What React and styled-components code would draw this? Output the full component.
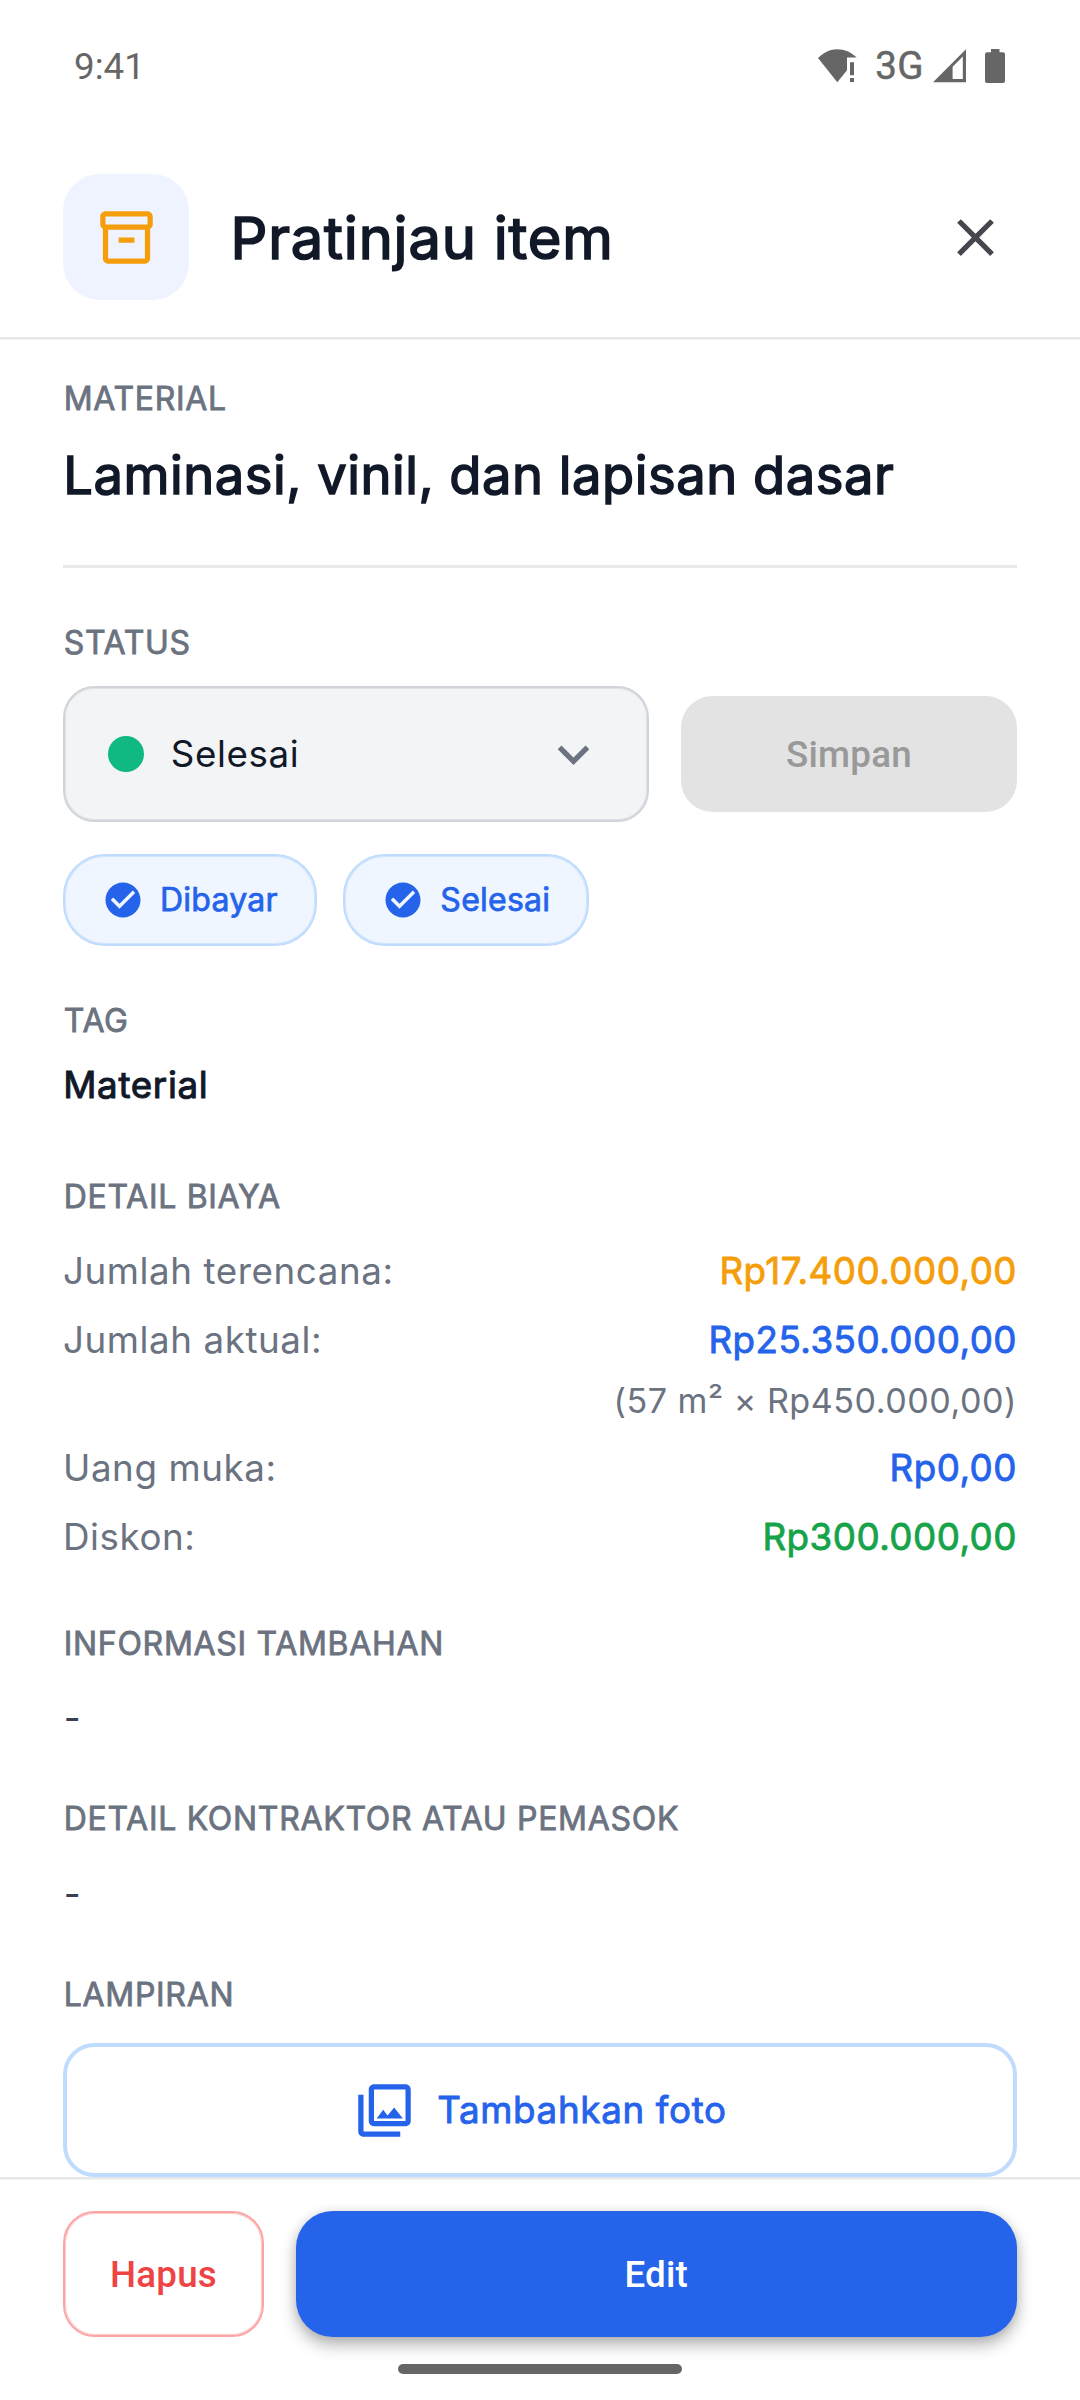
import React from "react";
import styled, { createGlobalStyle } from "styled-components";

const GlobalStyle = createGlobalStyle`
  *, *::before, *::after { box-sizing: border-box; }
  body {
    margin: 0;
    background: #ffffff;
    font-family: Inter, "Noto Sans", sans-serif;
    color: #111827;
  }
  button { font: inherit; margin: 0; cursor: pointer; }
  h1, h2, h3, p, dl, dt, dd { margin: 0; font-weight: 400; }
`;

const Screen = styled.div`
  display: flex;
  flex-direction: column;
  width: 1080px;
  height: 2400px;
  overflow: hidden;
  background: #ffffff;
`;

/* Status bar */

const StatusBar = styled.div`
  display: flex;
  align-items: center;
  justify-content: space-between;
  height: 132px;
  padding: 0 75px 0 74px;
  font-family: Roboto, sans-serif;
  color: #666666;
`;

const Clock = styled.span`
  padding-top: 1px;
  font-size: 36.75px;
  line-height: 44px;
`;

const Indicators = styled.div`
  display: flex;
  align-items: center;
  svg { display: block; fill: #666666; }
`;

const Network = styled.span`
  margin: 0 9px 0 18px;
  font-size: 38.5px;
  line-height: 44px;
  letter-spacing: 0.5px;
  -webkit-text-stroke: 0.5px currentColor;
`;

const BatterySlot = styled.span`
  margin-left: 19px;
`;

/* Header */

const Header = styled.header`
  display: flex;
  align-items: center;
  flex: none;
  height: 207px;
  padding: 5px 73px 0 63px;
  border-bottom: 2px solid #e5e7eb;
  box-shadow: 0 1px 0 #f1f2f4;
`;

const HeaderIcon = styled.div`
  display: flex;
  align-items: center;
  justify-content: center;
  width: 126px;
  height: 126px;
  border-radius: 36.75px;
  background: #eff3ff;
`;

const Title = styled.h1`
  flex: 1;
  margin-left: 41.5px;
  padding-top: 1px;
  font-size: 57.75px;
  line-height: 74px;
  letter-spacing: 0.84px;
  -webkit-text-stroke: 1.7px currentColor;
`;

const CloseButton = styled.button`
  display: flex;
  padding: 0;
  border: 0;
  background: none;
`;

const Icon = styled.svg`
  display: block;
  flex: none;
  width: ${(p) => p.$size || 63}px;
  height: ${(p) => p.$size || 63}px;
  fill: ${(p) => p.$color};
`;

/* Content */

const Content = styled.main`
  display: flex;
  flex-direction: column;
  flex: none;
  height: 1838px;
  padding: 38px 63px 0;
`;

const Label = styled.h3`
  margin-top: ${(p) => p.$top || 0}px;
  padding-top: 1px;
  height: 42px;
  font-size: 32px;
  line-height: 42px;
  letter-spacing: 0.7px;
  text-indent: 0.75px;
  text-transform: uppercase;
  color: #6b7280;
  -webkit-text-stroke: 0.8px currentColor;
`;

const ItemName = styled.h2`
  margin-top: 19px;
  padding-bottom: 53px;
  border-bottom: 3px solid #e9e9ec;
  font-size: 52.5px;
  line-height: 74px;
  letter-spacing: 0.52px;
  text-indent: 0.25px;
  -webkit-text-stroke: 1.5px currentColor;
`;

const StatusRow = styled.div`
  display: flex;
  align-items: center;
  gap: 32px;
  margin-top: 23px;
`;

const Select = styled.button`
  display: flex;
  align-items: center;
  width: 586px;
  height: 136px;
  padding: 0 42px 0 42.5px;
  border: 2px solid #d1d5db;
  border-radius: 31.5px;
  background: #f3f4f6;
  box-shadow: inset 0 0 0 1px rgba(209, 213, 219, 0.6);
`;

const StatusDot = styled.span`
  width: 36.75px;
  height: 36.75px;
  border-radius: 50%;
  background: #10b981;
`;

const SelectValue = styled.span`
  flex: 1;
  margin-left: 26.5px;
  font-size: 36.75px;
  line-height: 52px;
  letter-spacing: 0.62px;
  text-align: left;
  color: #111827;
`;

const SaveButton = styled.button`
  flex: 1;
  height: 116px;
  padding: 0;
  border: 0;
  border-radius: 31.5px;
  background: #e3e3e3;
  font-family: Roboto, sans-serif;
  font-size: 36.75px;
  font-weight: 500;
  letter-spacing: 0.26px;
  color: #999999;
`;

const Chips = styled.div`
  display: flex;
  gap: 26.5px;
  margin-top: 32px;
`;

const Chip = styled.span`
  display: flex;
  align-items: center;
  gap: 16px;
  height: 92px;
  padding: 0 37px;
  border: 2px solid #bfdbfe;
  border-radius: 42px;
  background: #eff6ff;
  box-shadow: inset 0 0 0 1px rgba(191, 219, 254, 0.6);
  font-size: 32px;
  line-height: 42px;
  letter-spacing: 0.25px;
  color: #2563eb;
  -webkit-text-stroke: 0.75px currentColor;
  svg { stroke: none; }
`;

const TagValue = styled.p`
  margin-top: 18px;
  font-size: 36.75px;
  line-height: 52px;
  letter-spacing: 0.66px;
  text-indent: 0.25px;
  -webkit-text-stroke: 1px currentColor;
`;

const CostList = styled.dl`
  margin-top: 28px;
`;

const CostRow = styled.div`
  display: flex;
  justify-content: space-between;
  margin-bottom: 17px;
  font-size: 36.75px;
  line-height: 52px;
`;

const CostName = styled.dt`
  letter-spacing: 0.57px;
  color: #6b7280;
`;

const CostValue = styled.dd`
  letter-spacing: 0.5px;
  color: ${(p) => p.$color};
  -webkit-text-stroke: 0.85px currentColor;
`;

const CostNote = styled.dd`
  margin: -3px 0 20px;
  font-size: 34.125px;
  line-height: 42px;
  letter-spacing: 0.52px;
  text-align: right;
  color: #6b7280;
`;

const Empty = styled.p`
  height: 52px;
  margin-top: ${(p) => p.$top}px;
  padding-top: 2px;
  font-size: 36.75px;
  line-height: 52px;
  text-indent: 0.75px;
  color: #374151;
`;

const PhotoButton = styled.button`
  display: flex;
  align-items: center;
  justify-content: center;
  gap: 21px;
  height: 134px;
  margin-top: 28px;
  padding: 0;
  border: 4px solid #bfdbfe;
  border-radius: 31.5px;
  background: #ffffff;
  font-size: 36.75px;
  letter-spacing: 0.67px;
  color: #2563eb;
`;

const PhotoText = styled.span`
  line-height: 52px;
  -webkit-text-stroke: 0.85px currentColor;
`;

/* Footer */

const Footer = styled.footer`
  display: flex;
  flex-direction: column;
  align-items: center;
  flex: none;
  height: 223px;
  border-top: 2px solid #e5e7eb;
  box-shadow: inset 0 1px 0 #f1f2f4;
`;

const Actions = styled.div`
  display: flex;
  gap: 31.5px;
  width: 100%;
  padding: 32px 63px 0;
`;

const ActionButton = styled.button`
  height: 126px;
  padding: 0;
  font-family: Roboto, sans-serif;
  font-size: 36.75px;
  font-weight: 500;
  letter-spacing: 0.2px;
`;

const DeleteButton = styled(ActionButton)`
  width: 201px;
  border: 2px solid #fca5a5;
  border-radius: 32px;
  background: #ffffff;
  box-shadow: inset 0 0 0 1px rgba(252, 165, 165, 0.6);
  color: #ef4444;
`;

const EditButton = styled(ActionButton)`
  flex: 1;
  border: 0;
  border-radius: 36.75px;
  background: #2563eb;
  box-shadow: 0 8px 16px rgba(0, 0, 0, 0.3), 0 0 10px rgba(0, 0, 0, 0.08);
  color: #ffffff;
`;

const HomeIndicator = styled.div`
  width: 284px;
  height: 10px;
  margin-top: 27px;
  border-radius: 5px;
  background: #666666;
`;

const PATHS = {
  box: "M20 2H4c-1 0-2 .9-2 2v3.01c0 .72.43 1.34 1 1.69V20c0 1.1 1.1 2 2 2h14c.9 0 2-.9 2-2V8.7c.57-.35 1-.97 1-1.69V4c0-1.1-1-2-2-2zm-1 18H5V9h14v11zm1-13H4V4h16v3zM9 12h6v2H9z",
  close:
    "M19 6.41L17.59 5 12 10.59 6.41 5 5 6.41 10.59 12 5 17.59 6.41 19 12 13.41 17.59 19 19 17.59 13.41 12z",
  chevron: "M7.41 8.59L12 13.17l4.59-4.58L18 10l-6 6-6-6z",
  check:
    "M12 2C6.48 2 2 6.48 2 12s4.48 10 10 10 10-4.48 10-10S17.52 2 12 2zm-2 15l-5-5 1.41-1.41L10 14.17l7.59-7.59L19 8l-9 9z",
  photos:
    "M20 4v12H8V4h12m0-2H8c-1.1 0-2 .9-2 2v12c0 1.1.9 2 2 2h12c1.1 0 2-.9 2-2V4c0-1.1-.9-2-2-2zm-8.5 9.67l1.69 2.26 2.48-3.1L19 15H9zM2 6v14c0 1.1.9 2 2 2h14v-2H4V6H2z",
};

const Glyph = ({ name, color, size }) => (
  <Icon viewBox="0 0 24 24" $color={color} $size={size} aria-hidden="true">
    <path d={PATHS[name]} />
  </Icon>
);

const WifiAlert = () => (
  <svg width="39" height="34" viewBox="0 0 39 34">
    <path d="M19.3 33.2 0 9C6 3 12 0.2 19.3 0.2S33 3 38.8 8.6H29V21.3Z" />
    <path d="M32 13.2h4v13h-4zM32 29h4v4h-4z" />
  </svg>
);

const Signal = () => (
  <svg width="33" height="34" viewBox="0 0 33 34">
    <path
      fillRule="evenodd"
      d="M0 33.3 33 0.3V33.3ZM19.6 17.8V30H29.8V7.6Z"
    />
  </svg>
);

const Battery = () => (
  <svg width="20" height="34" viewBox="0 0 20 34">
    <path d="M6 0h8.5v3.3H18a2 2 0 0 1 2 2V32a2 2 0 0 1-2 2H2a2 2 0 0 1-2-2V5.3a2 2 0 0 1 2-2h4z" />
  </svg>
);

const BLUE = "#2563eb";

const Cost = ({ name, value, color }) => (
  <CostRow>
    <CostName>{name}</CostName>
    <CostValue $color={color}>{value}</CostValue>
  </CostRow>
);

export default function App() {
  return (
    <Screen>
      <GlobalStyle />
      <StatusBar>
        <Clock>9:41</Clock>
        <Indicators>
          <WifiAlert />
          <Network>3G</Network>
          <Signal />
          <BatterySlot>
            <Battery />
          </BatterySlot>
        </Indicators>
      </StatusBar>

      <Header>
        <HeaderIcon>
          <Glyph name="box" color="#f59e0b" />
        </HeaderIcon>
        <Title>Pratinjau item</Title>
        <CloseButton aria-label="Tutup">
          <Glyph name="close" color="#49454f" />
        </CloseButton>
      </Header>

      <Content>
        <Label>Material</Label>
        <ItemName>Laminasi, vinil, dan lapisan dasar</ItemName>

        <Label $top={53}>Status</Label>
        <StatusRow>
          <Select>
            <StatusDot />
            <SelectValue>Selesai</SelectValue>
            <Glyph name="chevron" color="#6b7280" />
          </Select>
          <SaveButton disabled>Simpan</SaveButton>
        </StatusRow>
        <Chips>
          {["Dibayar", "Selesai"].map((text) => (
            <Chip key={text}>
              <Glyph name="check" color={BLUE} size={42} />
              {text}
            </Chip>
          ))}
        </Chips>

        <Label $top={53}>Tag</Label>
        <TagValue>Material</TagValue>

        <Label $top={64}>Detail biaya</Label>
        <CostList>
          <Cost name="Jumlah terencana:" value="Rp17.400.000,00" color="#f59e0b" />
          <Cost name="Jumlah aktual:" value="Rp25.350.000,00" color={BLUE} />
          <CostNote>(57 m² × Rp450.000,00)</CostNote>
          <Cost name="Uang muka:" value="Rp0,00" color={BLUE} />
          <Cost name="Diskon:" value="Rp300.000,00" color="#16a34a" />
        </CostList>

        <Label $top={42}>Informasi tambahan</Label>
        <Empty $top={26}>-</Empty>

        <Label $top={55}>Detail kontraktor atau pemasok</Label>
        <Empty $top={27}>-</Empty>

        <Label $top={55}>Lampiran</Label>
        <PhotoButton>
          <Glyph name="photos" color={BLUE} />
          <PhotoText>Tambahkan foto</PhotoText>
        </PhotoButton>
      </Content>

      <Footer>
        <Actions>
          <DeleteButton>Hapus</DeleteButton>
          <EditButton>Edit</EditButton>
        </Actions>
        <HomeIndicator />
      </Footer>
    </Screen>
  );
}
